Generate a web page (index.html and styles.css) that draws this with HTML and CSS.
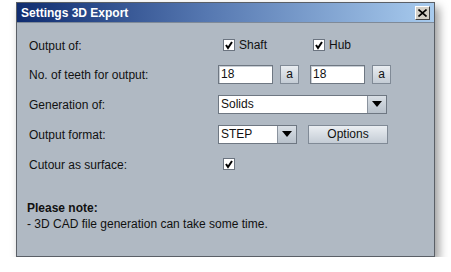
FILE: index.html
```html
<!DOCTYPE html>
<html lang="en">
<head>
    <meta charset="UTF-8">
    <title>Settings 3D Export</title>
    <link rel="stylesheet" href="styles.css">
</head>
<body>
    <div class="dialog">
        <div class="title-bar">
            <span class="title">Settings 3D Export</span>
            <button class="close-btn">
                <svg width="9" height="8" viewBox="0 0 9 8"><path d="M0.5 0.5 L8.5 7.5 M8.5 0.5 L0.5 7.5" stroke="#000" stroke-width="1.6"/></svg>
            </button>
        </div>
        <div class="dialog-body">
            <div class="form">
                <div class="row first">
                    <span class="label">Output of:</span>
                    <div class="controls">
                        <label class="check"><span class="box"><svg width="10" height="10" viewBox="0 0 10 10"><path d="M2 5 L4 8 L8 2" stroke="#000" stroke-width="2" fill="none"/></svg></span>Shaft</label>
                        <label class="check hub"><span class="box"><svg width="10" height="10" viewBox="0 0 10 10"><path d="M2 5 L4 8 L8 2" stroke="#000" stroke-width="2" fill="none"/></svg></span>Hub</label>
                    </div>
                </div>
                <div class="row">
                    <span class="label">No. of teeth for output:</span>
                    <div class="controls">
                        <div class="text-field short">18</div>
                        <button class="small-btn">a</button>
                        <div class="text-field short second">18</div>
                        <button class="small-btn">a</button>
                    </div>
                </div>
                <div class="row">
                    <span class="label">Generation of:</span>
                    <div class="controls">
                        <div class="combo wide">
                            <span class="combo-value">Solids</span>
                            <span class="combo-arrow"></span>
                        </div>
                    </div>
                </div>
                <div class="row">
                    <span class="label">Output format:</span>
                    <div class="controls">
                        <div class="combo narrow">
                            <span class="combo-value">STEP</span>
                            <span class="combo-arrow"></span>
                        </div>
                        <button class="options-btn">Options</button>
                    </div>
                </div>
                <div class="row">
                    <span class="label">Cutour as surface:</span>
                    <div class="controls">
                        <label class="check"><span class="box"><svg width="10" height="10" viewBox="0 0 10 10"><path d="M2 5 L4 8 L8 2" stroke="#000" stroke-width="2" fill="none"/></svg></span></label>
                    </div>
                </div>
            </div>
            <div class="note">
                <div class="note-title">Please note:</div>
                <div>- 3D CAD file generation can take some time.</div>
            </div>
        </div>
    </div>
</body>
</html>
```

FILE: styles.css
```css
body {
    margin: 0;
    padding: 2px 0 0 16px;
    background: #fff;
    font-family: "Liberation Sans", Arial, sans-serif;
    font-size: 12px;
    color: #111;
}

.dialog {
    width: 417px;
    height: 253px;
    border: 1px solid #5a5f66;
    background: #b0b9c3;
    box-shadow: 4px 5px 9px rgba(0, 0, 0, 0.4);
    display: flex;
    flex-direction: column;
}

.title-bar {
    height: 19px;
    display: flex;
    align-items: center;
    justify-content: space-between;
    padding: 0 4px 0 4px;
    background: linear-gradient(90deg, #0f2c70, #5577b0 45%, #a8cbee);
    border-bottom: 1px solid #7f8a98;
}

.title {
    color: #fff;
    font-weight: bold;
    font-size: 12px;
}

.close-btn {
    width: 15px;
    height: 14px;
    padding: 0;
    display: flex;
    align-items: center;
    justify-content: center;
    background: #d4d0c8;
    border: 1px solid;
    border-color: #fff #404040 #404040 #fff;
}

.dialog-body {
    flex: 1;
    padding: 8px 12px 0 12px;
}

.row {
    height: 30px;
    display: grid;
    grid-template-columns: 189px 1fr;
    align-items: center;
}

.row.first {
    height: 28px;
}

.label {
    padding-top: 1px;
}

.controls {
    display: flex;
    align-items: center;
}

.check {
    display: flex;
    align-items: center;
    gap: 4px;
    margin-left: 5px;
    width: 86px;
}

.check.hub {
    margin-left: 4px;
}

.box {
    width: 10px;
    height: 10px;
    background: #fff;
    border: 1px solid #6b7480;
    display: flex;
    align-items: center;
    justify-content: center;
}

.text-field {
    height: 17px;
    line-height: 17px;
    background: #fff;
    border: 1px solid #6e7782;
    box-shadow: inset 1px 1px 0 #c8ced5;
    padding-left: 2px;
    box-sizing: content-box;
}

.text-field.short {
    width: 51px;
}

.text-field.second {
    margin-left: 11px;
}

.small-btn {
    width: 19px;
    height: 19px;
    margin-left: 7px;
    padding: 0;
    font-family: inherit;
    font-size: 12px;
    color: #111;
    border: 1px solid #808a96;
    background: linear-gradient(#e9edf1, #c4ccd5);
}

.combo {
    height: 17px;
    display: flex;
    background: #fff;
    border: 1px solid #6e7782;
}

.combo.wide {
    width: 167px;
}

.combo.narrow {
    width: 77px;
}

.combo-value {
    flex: 1;
    line-height: 17px;
    padding-left: 2px;
}

.combo-arrow {
    width: 18px;
    border-left: 1px solid #8a939e;
    background: linear-gradient(#d9dfe5, #b8c1cb);
    display: flex;
    align-items: center;
    justify-content: center;
}

.combo-arrow::after {
    content: "";
    border-left: 5px solid transparent;
    border-right: 5px solid transparent;
    border-top: 6px solid #000;
}

.options-btn {
    width: 80px;
    height: 19px;
    margin-left: 11px;
    padding: 0;
    font-family: inherit;
    font-size: 12px;
    color: #111;
    border: 1px solid #808a96;
    background: linear-gradient(#eaeef2, #c4ccd5);
}

.note {
    margin-top: 21px;
    margin-left: -2px;
    line-height: 16px;
}

.note-title {
    font-weight: bold;
}
```
